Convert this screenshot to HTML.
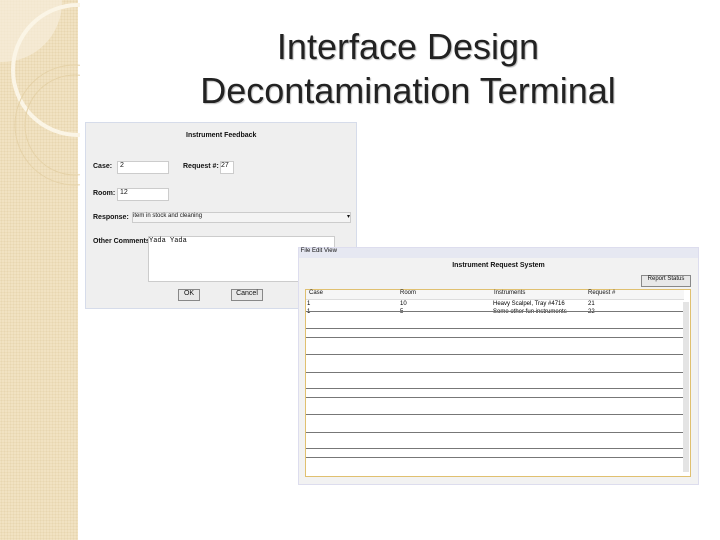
<!DOCTYPE html>
<html><head><style>
body{margin:0;width:720px;height:540px;background:#fff;position:relative;overflow:hidden;font-family:"Liberation Sans",sans-serif}
.side{position:absolute;left:0;top:0;width:78px;height:540px;background:#f1e2c2;
background-image:radial-gradient(#e8d6b0 1px,transparent 1px);background-size:3px 3px}
.a{position:absolute}
.t{position:absolute;left:78px;width:660px;text-align:center;font-size:36px;color:#222;text-shadow:1px 1px 1px #bbb}
.s{font-size:7px;color:#111}
.in{position:absolute;background:#fff;border:1px solid #ccc}
</style></head><body>
<div class="side"></div>
<svg class="a" style="left:0;top:0" width="80" height="200">
<path d="M0 0H62A60 60 0 0 1 0 62Z" fill="#f7eedb" opacity=".7"/>
<circle cx="78" cy="70" r="65" fill="none" stroke="#fbf5e6" stroke-width="4"/>
<circle cx="75" cy="125" r="60" fill="none" stroke="#e5d2a8" stroke-width="1"/>
<circle cx="75" cy="125" r="50" fill="none" stroke="#e5d2a8" stroke-width="1"/>
</svg>
<div class="t" style="top:26px">Interface Design</div>
<div class="t" style="top:70px">Decontamination Terminal</div>

<div class="a" style="left:85px;top:122px;width:270px;height:185px;background:#efefef;border:1px solid #d6dcea">
<div class="a s" style="left:100px;top:9px;font-weight:bold">Instrument Feedback</div>
<div class="a s" style="left:7px;top:40px;font-weight:bold">Case:</div>
<div class="in s" style="left:31px;top:38px;width:50px;height:11px">&nbsp;2</div>
<div class="a s" style="left:97px;top:40px;font-weight:bold">Request #:</div>
<div class="in s" style="left:134px;top:38px;width:12px;height:11px">27</div>
<div class="a s" style="left:7px;top:67px;font-weight:bold">Room:</div>
<div class="in s" style="left:31px;top:65px;width:50px;height:11px">&nbsp;12</div>
<div class="a s" style="left:7px;top:91px;font-weight:bold">Response:</div>
<div class="in s" style="left:46px;top:89px;width:217px;height:9px;background:#f4f4f4;font-size:6px">item in stock and cleaning<span style="float:right">▾</span></div>
<div class="a s" style="left:7px;top:115px;font-weight:bold">Other Comments:</div>
<div class="in s" style="left:62px;top:113px;width:185px;height:44px;font-family:'Liberation Mono'">Yada Yada</div>
<div class="in s" style="left:92px;top:166px;width:20px;height:10px;background:#e8e8e8;border-color:#888;text-align:center">OK</div>
<div class="in s" style="left:145px;top:166px;width:30px;height:10px;background:#e8e8e8;border-color:#888;text-align:center">Cancel</div>
</div>

<div class="a" style="left:298px;top:247px;width:399px;height:236px;background:#f2f2f2;border:1px solid #dde">
<div class="a s" style="left:0;top:0;width:399px;height:10px;background:#e6e8f2;font-size:6px">&nbsp;File Edit View</div>
<div class="a s" style="left:0;top:14px;width:399px;text-align:center;font-weight:bold">Instrument Request System</div>
<div class="in s" style="left:342px;top:27px;width:48px;height:10px;background:#e8e8e8;border-color:#888;text-align:center;font-size:6px">Report Status</div>
<div class="a" style="left:6px;top:41px;width:384px;height:186px;background:#fff;border:1px solid #e0c070">
<div class="a s" style="left:0;top:0;width:378px;height:9px;background:#f6f6f6;font-size:6px;border-bottom:1px solid #ddd">
<span class="a" style="left:3px">Case</span><span class="a" style="left:94px">Room</span><span class="a" style="left:188px">Instruments</span><span class="a" style="left:282px">Request #</span></div>
<div class="a" style="left:0;top:11px;width:378px;font-size:6px">
<span class="a" style="left:1px">1</span><span class="a" style="left:94px">10</span><span class="a" style="left:187px">Heavy Scalpel, Tray #4716</span><span class="a" style="left:282px">21</span></div>
<div class="a" style="left:0;top:19px;width:378px;font-size:6px">
<span class="a" style="left:1px">1</span><span class="a" style="left:94px">5</span><span class="a" style="left:187px">Some other fun instruments</span><span class="a" style="left:282px">22</span></div>
<svg class="a" style="left:0;top:0" width="384" height="186">
<g stroke="#777" stroke-width="1">
<path d="M0 21.5H378M0 38.5H378M0 47.5H378M0 64.5H378M0 82.5H378M0 98.5H378M0 107.5H378M0 124.5H378M0 142.5H378M0 158.5H378M0 167.5H378"/>
</g>
<rect x="377" y="12" width="6" height="170" fill="#e4e4e4"/>
</svg>
</div>
</div>
</body></html>
